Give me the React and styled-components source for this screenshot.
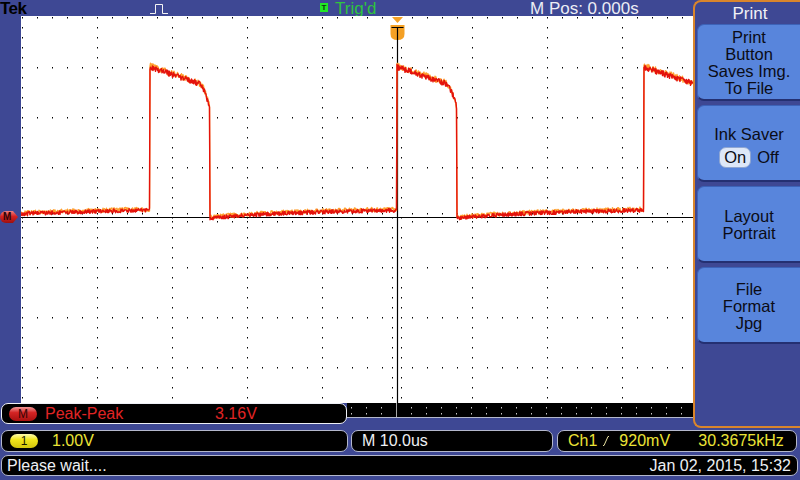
import React from 'react';
import styled, { createGlobalStyle } from 'styled-components';

const BLUE = '#3e4894';

const GlobalStyle = createGlobalStyle`
  html, body { margin: 0; padding: 0; background: ${BLUE}; }
  body { font-family: "Liberation Sans", Arial, sans-serif; }
`;

// ---- waveform + graticule data ----
const rng = (seed) => {
  let s = seed;
  return () => {
    s = (s * 1103515245 + 12345) & 0x7fffffff;
    return s / 0x7fffffff;
  };
};

const level = (x) => {
  const t = (((x - 150) % 247) + 247) % 247;
  if (t < 60) {
    let y = 67 + 0.34 * t;
    if (t > 48) y += (t - 48) * (t - 48) * 0.15;
    return y;
  }
  return 218 - 9.5 * (1 - Math.exp(-(t - 60) / 110));
};

const makeTrace = (seed, amp, shift) => {
  const rand = rng(seed);
  const pts = [];
  for (let x = 21; x <= 700; x += 0.5) {
    const base = level(x);
    const k = base < 150 ? 1.4 : 1;
    const n = (rand() - 0.5) * amp * k;
    pts.push(`${x},${(base + n + shift).toFixed(1)}`);
  }
  return pts.join(' ');
};

const dot = (x, y) => `M${x} ${y}h1v1.4h-1z`;

const gridDots = () => {
  let d = '';
  for (let i = 0; i <= 10; i++) {
    const x = 22 + 75 * i;
    if (x === 397) continue;
    for (let y = 17; y < 403; y += 10) d += dot(x, y);
  }
  for (let j = 0; j <= 7; j++) {
    const y = 17 + 50 * j;
    if (y === 217) continue;
    for (let x = 22; x < 773; x += 15) d += dot(x, y);
  }
  for (let x = 22; x < 773; x += 15) {
    d += dot(x, 213);
    d += dot(x, 221);
  }
  for (let y = 47; y < 403; y += 10) {
    d += dot(392, y);
    d += dot(401, y);
  }
  return d;
};

const stripDots = () => {
  let d = '';
  for (let x = 352; x < 773; x += 15) {
    d += dot(x, 407);
    d += dot(x, 413);
  }
  return d;
};

const GRID = gridDots();
const STRIP = stripDots();
const ORANGE_TRACE = makeTrace(7, 4.4, -1);
const RED_TRACE = makeTrace(31, 4, 0);

// ---- layout ----
const Screen = styled.div`
  position: relative;
  width: 800px;
  height: 480px;
  overflow: hidden;
  background: ${BLUE};
  display: flex;
  flex-direction: column;
  font-family: "Liberation Sans", Arial, sans-serif;
`;

const TopBar = styled.div`
  height: 16px;
  display: grid;
  grid-template-columns: 150px 170px 210px 1fr;
  align-items: start;
  color: #ecedf4;
  font-size: 17px;
  line-height: 18px;
  white-space: nowrap;
`;

const Brand = styled.div`
  color: #000;
  font-weight: bold;
  font-size: 17px;
  line-height: 17px;
  letter-spacing: -0.5px;
`;

const PulseIcon = styled.svg`
  margin-top: 3px;
  display: block;
`;

const TrigState = styled.div`
  display: flex;
  align-items: flex-start;
  color: #2fc43e;
`;

const TrigBox = styled.span`
  width: 8px;
  height: 9px;
  margin-top: 3px;
  margin-right: 7px;
  background: #22e626;
  color: #0b3a0b;
  font-size: 8px;
  line-height: 9px;
  font-weight: bold;
  text-align: center;
`;

const PlotRow = styled.div`
  height: 387px;
  display: flex;
`;

const Gutter = styled.div`
  width: 21px;
  flex: none;
  padding-top: 195px;
  box-sizing: border-box;
`;

const RefMarker = styled.div`
  width: 18px;
  height: 12px;
  background: linear-gradient(#f08080, #d42222 45%, #9c1010);
  clip-path: polygon(0 0, 72% 0, 100% 50%, 72% 100%, 0 100%);
  border-radius: 6px 0 0 6px;
  color: #2a0505;
  font-size: 10px;
  font-weight: bold;
  line-height: 12px;
  padding-left: 3px;
  box-sizing: border-box;
`;

const Plot = styled.svg`
  display: block;
  flex: none;
`;

const ReadoutRow = styled.div`
  height: 21px;
  display: flex;
  padding-left: 1px;
`;

const Panel = styled.div`
  box-sizing: border-box;
  width: ${(p) => p.$w}px;
  height: 100%;
  background: #000;
  border: ${(p) => (p.$bright ? '1.5px solid #eef0f6' : '1px solid #b4b8cc')};
  border-radius: 7px;
  display: flex;
  align-items: center;
  padding: 0 ${(p) => p.$pr || 0}px 0 ${(p) => p.$pl || 0}px;
  font-size: 16px;
  line-height: 1;
  white-space: nowrap;
  color: ${(p) => p.$color || '#eef0f4'};
  flex: none;
`;

const Strip = styled.svg`
  display: block;
  flex: none;
`;

const Badge = styled.span`
  width: 28px;
  height: 14px;
  border-radius: 7px;
  background: ${(p) =>
    p.$tone === 'red'
      ? 'linear-gradient(#f39a9a, #d42424 40%, #a81010)'
      : 'linear-gradient(#fffcb0, #f2e61c 40%, #d2c40c)'};
  color: ${(p) => (p.$tone === 'red' ? '#300606' : '#1a1a00')};
  font-size: 12px;
  line-height: 14px;
  text-align: center;
  flex: none;
`;

const Label = styled.span`
  width: ${(p) => (p.$w ? `${p.$w}px` : 'auto')};
  margin-left: ${(p) => p.$ml || 0}px;
  flex: none;
`;

const StatusRow = styled.div`
  height: 22px;
  margin-top: 6px;
  display: flex;
  gap: ${(p) => p.$gap || 0}px;
  padding-left: 1px;
`;

const InfoRow = styled.div`
  height: 21px;
  margin-top: 3px;
  display: flex;
  padding-left: 1px;
`;

const Spacer = styled.span`
  flex: 1;
`;

const Slope = styled.svg`
  margin: 0 10px 0 6px;
  flex: none;
`;

const Menu = styled.div`
  position: absolute;
  top: 0;
  left: 693px;
  width: 112px;
  height: 428px;
  box-sizing: border-box;
  border: 2px solid #d9852c;
  border-right: none;
  border-radius: 8px 0 0 8px;
  background: ${BLUE};
  display: flex;
  flex-direction: column;
`;

const MenuTitle = styled.div`
  height: 22px;
  color: #f0f1f6;
  font-size: 17px;
  line-height: 24px;
  text-align: center;
`;

const MenuList = styled.div`
  display: flex;
  flex-direction: column;
  gap: 4px;
  padding-left: 2px;
`;

const MenuButton = styled.div`
  width: 103px;
  height: 77px;
  box-sizing: border-box;
  padding-top: 2px;
  background: #5885dc;
  border: 1px solid #3d63b8;
  border-bottom: 2px solid #243072;
  border-right: none;
  border-radius: 7px 0 0 7px;
  display: flex;
  flex-direction: column;
  align-items: center;
  justify-content: center;
  color: #0b0c16;
  font-size: 16.5px;
  line-height: 17px;
  text-align: center;
`;

const Toggle = styled.div`
  display: flex;
  align-items: center;
  margin-top: 4px;
  gap: 6px;
`;

const Pill = styled.span`
  background: #dde7f8;
  border: 1px solid #8fa6d2;
  border-radius: 7px;
  padding: 1px 4px;
`;

const menu = [
  ['Print', 'Button', 'Saves Img.', 'To File'],
  null,
  ['Layout', 'Portrait'],
  ['File', 'Format', 'Jpg'],
];

export default function App() {
  return (
    <Screen>
      <GlobalStyle />
      <TopBar>
        <Brand>Tek</Brand>
        <PulseIcon width="19" height="11" viewBox="0 0 19 11">
          <path d="M0 10.5H5.5V1.5H12.5V10.5H18" fill="none" stroke="#f4f4f4" strokeWidth="1" />
        </PulseIcon>
        <TrigState>
          <TrigBox>T</TrigBox>
          Trig'd
        </TrigState>
        <div>M Pos: 0.000s</div>
      </TopBar>

      <PlotRow>
        <Gutter>
          <RefMarker>M</RefMarker>
        </Gutter>
        <Plot width="752" height="387" viewBox="21 16 752 387">
          <rect x="21" y="16" width="752" height="387" fill="#ffffff" />
          <path d={GRID} fill="#000" />
          <line x1="21" y1="217.5" x2="773" y2="217.5" stroke="#000" strokeWidth="1" />
          <line x1="397.5" y1="27" x2="397.5" y2="403" stroke="#000" strokeWidth="1.2" />
          <polyline points={ORANGE_TRACE} fill="none" stroke="#ffa030" strokeWidth="1.4" strokeLinejoin="round" />
          <polyline points={RED_TRACE} fill="none" stroke="#e4120c" strokeWidth="1.4" strokeLinejoin="round" />
          <path d="M392 17H403L397.5 23Z" fill="#f4a024" />
          <path d="M390.5 25H404.5V34Q404.5 40 397.5 40Q390.5 40 390.5 34Z" fill="#f4a024" />
          <path d="M391.5 27.5H403.5M397.5 27.5V40" stroke="#000" strokeWidth="1.2" fill="none" />
        </Plot>
      </PlotRow>

      <ReadoutRow>
        <Panel $w={346} $bright $pl={7} $color="#e02424">
          <Badge $tone="red">M</Badge>
          <Label $w={170} $ml={8}>Peak-Peak</Label>
          <Label>3.16V</Label>
        </Panel>
        <Strip width="425" height="15" viewBox="348 403 425 15">
          <rect x="348" y="403" width="425" height="15" fill="#000" />
          <path d={STRIP} fill="#c8c8c8" />
          <line x1="397.5" y1="403" x2="397.5" y2="418" stroke="#a8a8a8" strokeWidth="1" />
          <line x1="348" y1="417.5" x2="773" y2="417.5" stroke="#b4b8cc" strokeWidth="1" />
        </Strip>
      </ReadoutRow>

      <StatusRow $gap={3}>
        <Panel $w={347} $pl={8} $color="#ece436">
          <Badge $tone="yellow">1</Badge>
          <Label $ml={14}>1.00V</Label>
        </Panel>
        <Panel $w={202} $pl={10}>M 10.0us</Panel>
        <Panel $w={240} $pl={10} $color="#ece436" style={{ marginLeft: 1 }}>
          <Label>Ch1</Label>
          <Slope width="6" height="10" viewBox="0 0 6 10">
            <path d="M0 9.5H1L5 0.5H6" fill="none" stroke="#e6e0a0" strokeWidth="1" />
          </Slope>
          <Label $w={79}>920mV</Label>
          <Label>30.3675kHz</Label>
        </Panel>
      </StatusRow>

      <InfoRow>
        <Panel $w={797} $pl={5} $pr={6}>
          <Label>Please wait....</Label>
          <Spacer />
          <Label>Jan 02, 2015, 15:32</Label>
        </Panel>
      </InfoRow>

      <Menu>
        <MenuTitle>Print</MenuTitle>
        <MenuList>
          {menu.map((lines, i) =>
            lines ? (
              <MenuButton key={i}>
                {lines.map((l) => (
                  <div key={l}>{l}</div>
                ))}
              </MenuButton>
            ) : (
              <MenuButton key={i} style={{ paddingTop: 8 }}>
                <div>Ink Saver</div>
                <Toggle>
                  <Pill>On</Pill>
                  <span>Off</span>
                </Toggle>
              </MenuButton>
            )
          )}
        </MenuList>
      </Menu>
    </Screen>
  );
}
